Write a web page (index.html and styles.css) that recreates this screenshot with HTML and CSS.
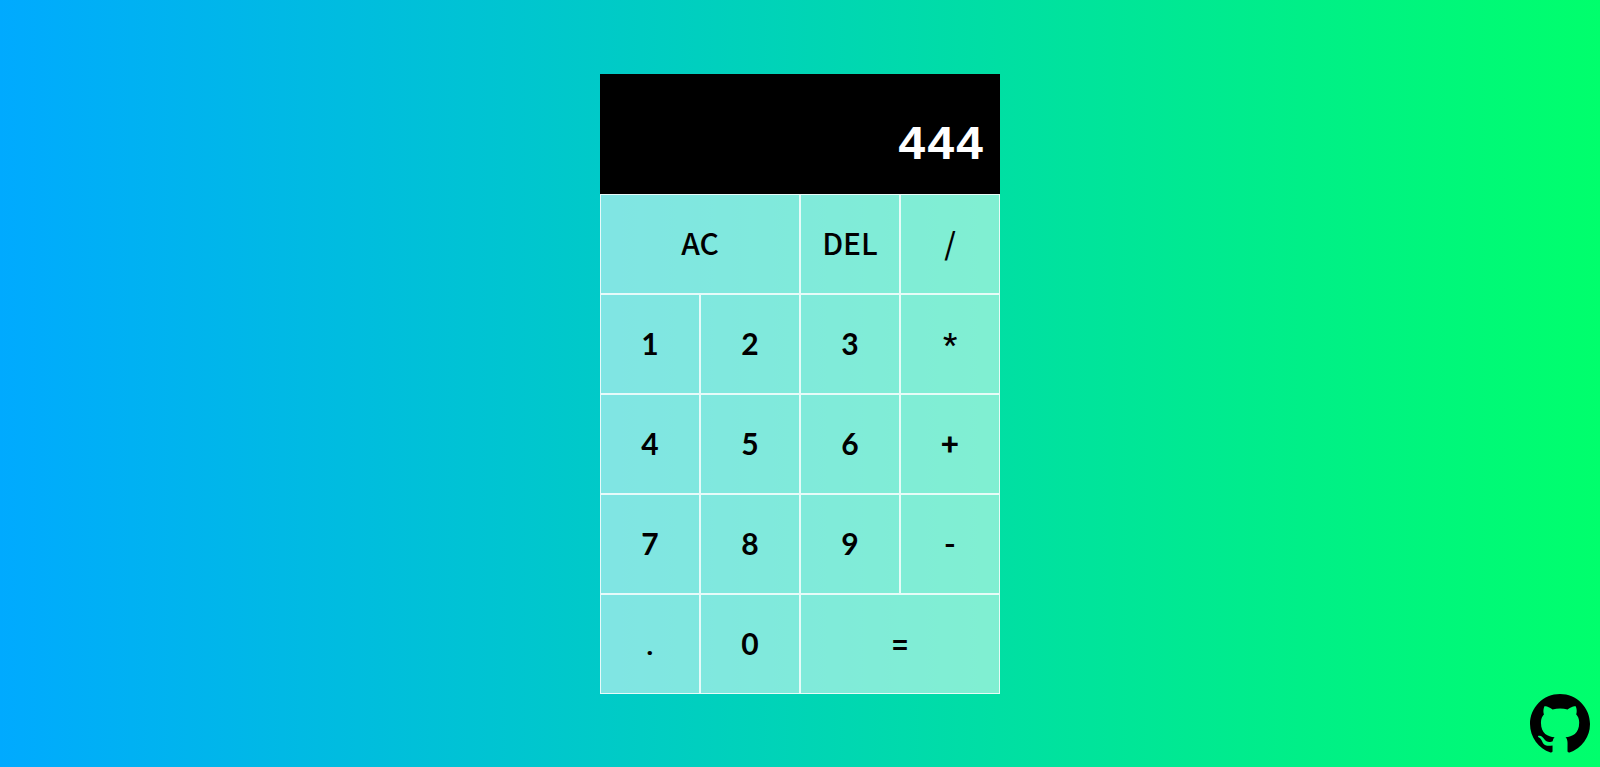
FILE: index.html
```
<!DOCTYPE html>
<html lang="en">
<head>
<meta charset="utf-8">
<meta name="viewport" content="width=device-width, initial-scale=1">
<title>Calculator</title>
<link rel="stylesheet" href="styles.css">
</head>
<body>
<main class="calculator">
  <output class="display" aria-label="Result">444</output>
  <button type="button" class="key wide">AC</button>
  <button type="button" class="key">DEL</button>
  <button type="button" class="key">/</button>
  <button type="button" class="key digit">1</button>
  <button type="button" class="key digit">2</button>
  <button type="button" class="key digit">3</button>
  <button type="button" class="key operator">*</button>
  <button type="button" class="key digit">4</button>
  <button type="button" class="key digit">5</button>
  <button type="button" class="key digit">6</button>
  <button type="button" class="key operator">+</button>
  <button type="button" class="key digit">7</button>
  <button type="button" class="key digit">8</button>
  <button type="button" class="key digit">9</button>
  <button type="button" class="key operator">-</button>
  <button type="button" class="key operator">.</button>
  <button type="button" class="key digit">0</button>
  <button type="button" class="key operator wide">=</button>
</main>
<a class="github" href="#" aria-label="GitHub">
  <svg viewBox="0 0 16 16" aria-hidden="true"><path d="M8 0C3.58 0 0 3.58 0 8c0 3.54 2.29 6.53 5.47 7.59.4.07.55-.17.55-.38 0-.19-.01-.82-.01-1.49-2.01.37-2.53-.49-2.69-.94-.09-.23-.48-.94-.82-1.13-.28-.15-.68-.52-.01-.53.63-.01 1.08.58 1.23.82.72 1.21 1.87.87 2.33.66.07-.52.28-.87.51-1.07-1.78-.2-3.64-.89-3.64-3.95 0-.87.31-1.59.82-2.15-.08-.2-.36-1.02.08-2.12 0 0 .67-.21 2.2.82.64-.18 1.32-.27 2-.27s1.36.09 2 .27c1.53-1.04 2.2-.82 2.2-.82.44 1.1.16 1.92.08 2.12.51.56.82 1.27.82 2.15 0 3.07-1.87 3.75-3.65 3.95.29.25.54.73.54 1.48 0 1.07-.01 1.93-.01 2.2 0 .21.15.46.55.38A8.01 8.01 0 0 0 16 8c0-4.42-3.58-8-8-8z"/></svg>
</a>
</body>
</html>
```
FILE: styles.css
```
*,
*::before,
*::after {
  box-sizing: border-box;
}

body {
  margin: 0;
  min-height: 100vh;
  display: grid;
  place-items: center;
  background: linear-gradient(to right, #00aaff, #00ff6c);
}

.calculator {
  display: grid;
  grid-template-columns: repeat(4, 100px);
  grid-template-rows: minmax(120px, auto) repeat(5, 100px);
}

.display {
  grid-column: 1 / -1;
  display: flex;
  align-items: flex-end;
  justify-content: flex-end;
  padding: 20px 16px;
  background: #000;
  color: #fff;
  font: 700 48px/56px "Liberation Mono", monospace;
}

.key {
  padding: 0 0 4px;
  border: 1px solid rgba(255, 255, 255, 0.8);
  border-radius: 0;
  background: rgba(255, 255, 255, 0.5);
  color: #000;
  font: 500 30px/40px "Noto Sans CJK SC", sans-serif;
  cursor: pointer;
}

.key:hover {
  background: rgba(255, 255, 255, 0.9);
}

.digit {
  padding-bottom: 2px;
  font-family: Lato, sans-serif;
  font-weight: 700;
}

.operator {
  padding-bottom: 0;
  font-family: Roboto, sans-serif;
  font-size: 32px;
}

.wide {
  grid-column: span 2;
}

.github {
  position: fixed;
  right: 10px;
  bottom: 13px;
  width: 60px;
}

.github svg {
  display: block;
  width: 100%;
}
```
